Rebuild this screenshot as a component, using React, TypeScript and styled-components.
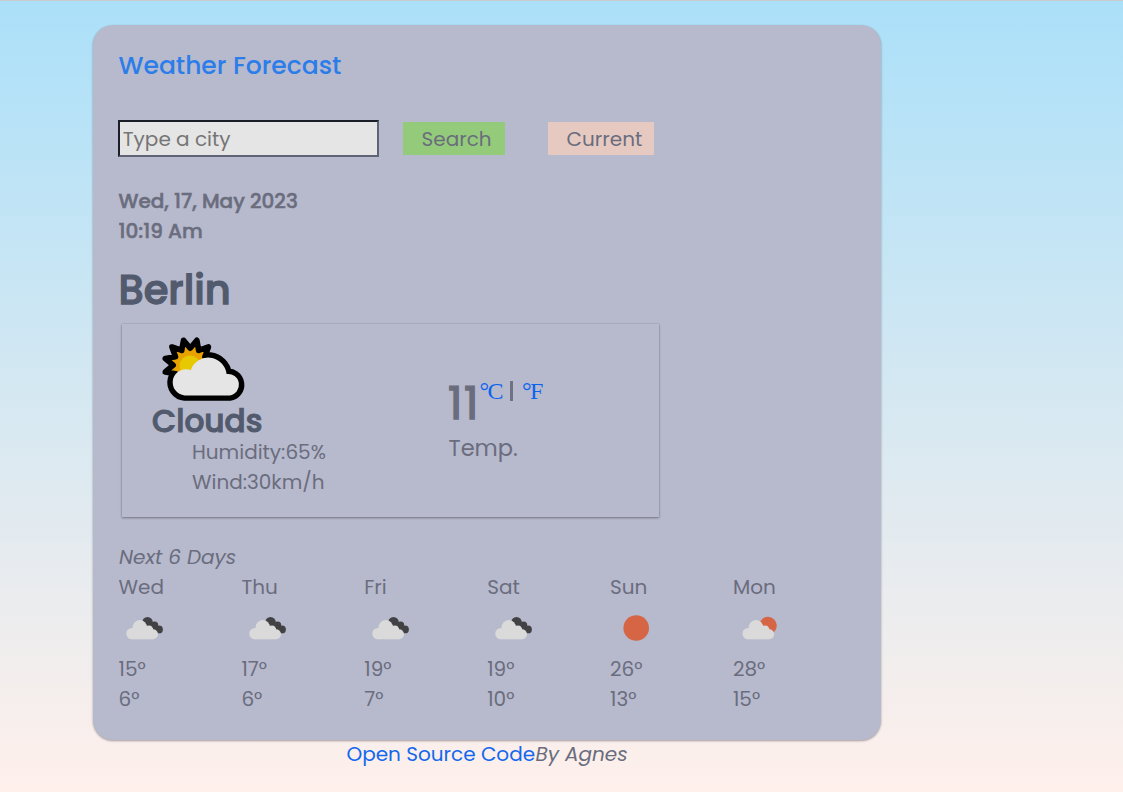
import React from "react";
import styled, { createGlobalStyle } from "styled-components";

const sans = `Poppins, Inter, sans-serif`;

const GlobalStyle = createGlobalStyle`
  * { box-sizing: border-box; }
  body {
    margin: 0;
    min-height: 792px;
    border-top: 1px solid #cbcbcf;
    background: linear-gradient(180deg, #abe0f9 0%, #fff0eb 100%);
    font-family: ${sans};
    font-size: 20px;
    line-height: 30px;
    color: #6a6d7d;
  }
`;

const Page = styled.div`
  width: 788.6px;
  margin: 24px 0 0 92.8px;
`;

const Card = styled.main`
  height: 715px;
  padding: 22px 25.7px 0;
  border-radius: 20px;
  background: #b7b9cd;
  box-shadow: 0 1px 3px rgba(0, 0, 0, 0.12), 0 1px 2px rgba(0, 0, 0, 0.24);
`;

const Text = styled.span`
  white-space: nowrap;
`;

const Title = styled.h1`
  margin: 0 0 35px;
  font-size: 25px;
  line-height: 38px;
  font-weight: 500;
  color: #2b7de9;
`;

const SearchForm = styled.form`
  display: flex;
  align-items: center;
  height: 37px;
  margin-left: -0.5px;
`;

const CityInput = styled.input`
  width: 261px;
  height: 37px;
  margin-right: 24px;
  padding: 1px 2.8px;
  border: 2px solid;
  border-color: #1c1e27 #5f6575 #5f6575 #1c1e27;
  border-radius: 0;
  background: #e5e5e5;
  font: inherit;
  &::placeholder { color: #757575; opacity: 1; }
`;

const Button = styled.button<{ $fill: string; $width: number }>`
  width: ${(p) => p.$width}px;
  height: 33px;
  margin: 0 43px 0 0;
  padding: 0 0 0 18.6px;
  border: 0;
  background: ${(p) => p.$fill};
  color: #6a6d7d;
  font: inherit;
  text-align: left;
`;

const DateBlock = styled.div`
  display: flex;
  flex-direction: column;
  margin-top: 29px;
  font-weight: 500;
  -webkit-text-stroke: 0.5px currentColor;
`;

const City = styled.h2`
  margin: 19px 0 0 0;
  font-size: 40px;
  line-height: 51px;
  font-weight: 500;
  -webkit-text-stroke: 1.25px currentColor;
  color: #525a6d;
`;

const Current = styled.section`
  display: flex;
  width: 537px;
  height: 193px;
  margin: 8px 0 0 4px;
  padding: 11px 0 0 29px;
  box-shadow: 0 1px 3px rgba(0, 0, 0, 0.12), 0 1px 2px rgba(0, 0, 0, 0.24),
    0 0 1px rgba(0, 0, 0, 0.25);
`;

const Conditions = styled.div`
  width: 297px;
`;

const ConditionIcon = styled.svg`
  display: block;
  width: 90px;
  height: 68px;
  margin-left: 8.5px;
`;

const ConditionName = styled.h3`
  margin: 0 0 0 0.6px;
  font-size: 31.2px;
  line-height: 34px;
  padding-top: 1px;
  height: 34px;
  font-weight: 500;
  -webkit-text-stroke: 1.05px currentColor;
  color: #525a6d;
`;

const Details = styled.div`
  display: flex;
  flex-direction: column;
  padding-left: 40.5px;
`;

const Temperature = styled.div`
  display: flex;
  flex-direction: column;
  padding-top: 39px;
`;

const Reading = styled.div`
  display: flex;
  height: 59px;
`;

const Degrees = styled.strong`
  width: 31.5px;
  margin-left: -0.5px;
  font-size: 45px;
  line-height: 60px;
  font-weight: 400;
  letter-spacing: 1.5px;
  -webkit-text-stroke: 1.4px currentColor;
`;

const Units = styled.div`
  display: flex;
  height: 30px;
`;

const Unit = styled.a`
  font-family: "Liberation Serif", serif;
  font-size: 24px;
  line-height: 34px;
  letter-spacing: -1.6px;
  color: #0d63ee;
`;

const Divider = styled.i`
  width: 3px;
  height: 20px;
  margin: 7px 9px 0 8px;
  background: #6f7285;
`;

const TempLabel = styled.div`
  font-size: 22.5px;
  line-height: 30px;
`;

const NextDays = styled.em`
  display: block;
  margin: 25px 0 0 0.5px;
`;

const Forecast = styled.section`
  display: grid;
  grid-template-columns: repeat(6, 122.9px);
`;

const Day = styled.div`
  display: flex;
  flex-direction: column;
`;

const DayIcon = styled.svg`
  width: 50px;
  height: 50px;
  margin: 1px 0;
`;

const Footer = styled.footer`
  display: flex;
  justify-content: center;
  margin-top: -1px;
`;

const SourceLink = styled.a`
  color: #1468ee;
`;

const Author = styled.em`
  margin-left: 0.5px;
`;

// Twelve-pointed star alternating between outer and inner radius.
const starPoints = Array.from({ length: 24 }, (_, i) => {
  const r = i % 2 === 0 ? 25.8 : 17;
  const a = ((i * 15 + 15) * Math.PI) / 180;
  return `${(30.2 + r * Math.cos(a)).toFixed(2)},${(30.2 + r * Math.sin(a)).toFixed(2)}`;
}).join(" ");

const cloudPath =
  "M24.7 60.4A13.1 13.1 0 1 1 30.7 35.2A18.5 18.5 0 0 1 66.6 39A10.8 10.8 0 1 1 69.7 60.4Z";

function PartlyCloudy() {
  return (
    <ConditionIcon viewBox="0 0 90 68">
      <path d={cloudPath} fill="#000" stroke="#000" strokeWidth="10.8" strokeLinejoin="round" />
      <polygon points={starPoints} fill="#e8a200" stroke="#000" strokeWidth="5.6" strokeLinejoin="round" />
      <circle cx="30" cy="30.8" r="10.4" fill="#e6c900" />
      <path d={cloudPath} fill="#e5e5e5" />
    </ConditionIcon>
  );
}

function SmallCloud() {
  return (
    <g fill="#d9dad9">
      <circle cx="14" cy="30.6" r="5.7" />
      <circle cx="21.8" cy="24.3" r="7.2" />
      <circle cx="30.9" cy="26.5" r="3.9" />
      <circle cx="35" cy="31.3" r="5" />
      <rect x="14" y="25" width="21" height="11.3" />
    </g>
  );
}

type Sky = "broken" | "clear" | "few";

function SkyIcon({ sky }: { sky: Sky }) {
  return (
    <DayIcon viewBox="0 0 50 50">
      {sky === "broken" && (
        <>
          <g fill="#424244">
            <circle cx="29.5" cy="19.3" r="5.3" />
            <circle cx="36.6" cy="22" r="3.6" />
            <circle cx="41" cy="26.4" r="3.9" />
            <path d="M30 22L36 19L42 29L38 30Z" />
          </g>
          <SmallCloud />
        </>
      )}
      {sky === "clear" && <circle cx="26.2" cy="25" r="12.8" fill="#d66545" />}
      {sky === "few" && (
        <g transform="translate(1.2 0)">
          <circle cx="33.8" cy="22.6" r="8.8" fill="#d66545" />
          <SmallCloud />
        </g>
      )}
    </DayIcon>
  );
}

const days: { name: string; sky: Sky; high: number; low: number }[] = [
  { name: "Wed", sky: "broken", high: 15, low: 6 },
  { name: "Thu", sky: "broken", high: 17, low: 6 },
  { name: "Fri", sky: "broken", high: 19, low: 7 },
  { name: "Sat", sky: "broken", high: 19, low: 10 },
  { name: "Sun", sky: "clear", high: 26, low: 13 },
  { name: "Mon", sky: "few", high: 28, low: 15 },
];

export default function App() {
  return (
    <>
      <GlobalStyle />
      <Page>
        <Card>
          <Title>Weather Forecast</Title>
          <SearchForm>
            <CityInput placeholder="Type a city" />
            <Button type="button" $fill="#94cb7b" $width={102}>Search</Button>
            <Button type="button" $fill="#e6cac2" $width={106}>Current</Button>
          </SearchForm>
          <DateBlock>
            <Text>Wed, 17, May 2023</Text>
            <Text>10:19 Am</Text>
          </DateBlock>
          <City>Berlin</City>
          <Current>
            <Conditions>
              <PartlyCloudy />
              <ConditionName>Clouds</ConditionName>
              <Details>
                <Text>Humidity:65%</Text>
                <Text>Wind:30km/h</Text>
              </Details>
            </Conditions>
            <Temperature>
              <Reading>
                <Degrees>11</Degrees>
                <Units>
                  <Unit>°C</Unit>
                  <Divider />
                  <Unit>°F</Unit>
                </Units>
              </Reading>
              <TempLabel>Temp.</TempLabel>
            </Temperature>
          </Current>
          <NextDays>Next 6 Days</NextDays>
          <Forecast>
            {days.map((d) => (
              <Day key={d.name}>
                <Text>{d.name}</Text>
                <SkyIcon sky={d.sky} />
                <Text>{d.high}°</Text>
                <Text>{d.low}°</Text>
              </Day>
            ))}
          </Forecast>
        </Card>
        <Footer>
          <SourceLink>Open Source Code</SourceLink>
          <Author>By Agnes</Author>
        </Footer>
      </Page>
    </>
  );
}
